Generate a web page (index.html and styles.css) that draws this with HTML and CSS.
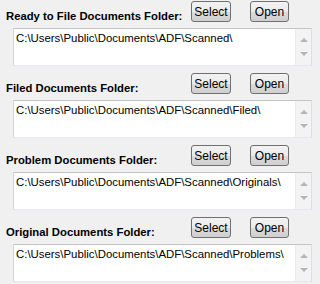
FILE: index.html
```html
<!DOCTYPE html>
<html lang="en">
<head>
    <meta charset="UTF-8">
    <title>Folders</title>
    <link rel="stylesheet" href="styles.css">
</head>
<body>
    <div class="panel">
        <div class="folder">
            <div class="folder-head">
                <span class="folder-label">Ready to File Documents Folder:</span>
                <button class="btn btn-select">Select</button>
                <button class="btn btn-open">Open</button>
            </div>
            <div class="path-box">
                <div class="path-text">C:\Users\Public\Documents\ADF\Scanned\</div>
                <div class="scroll"><span class="arrow-up"></span><span class="arrow-down"></span></div>
            </div>
        </div>

        <div class="folder">
            <div class="folder-head">
                <span class="folder-label">Filed Documents Folder:</span>
                <button class="btn btn-select">Select</button>
                <button class="btn btn-open">Open</button>
            </div>
            <div class="path-box">
                <div class="path-text">C:\Users\Public\Documents\ADF\Scanned\Filed\</div>
                <div class="scroll"><span class="arrow-up"></span><span class="arrow-down"></span></div>
            </div>
        </div>

        <div class="folder">
            <div class="folder-head">
                <span class="folder-label">Problem Documents Folder:</span>
                <button class="btn btn-select">Select</button>
                <button class="btn btn-open">Open</button>
            </div>
            <div class="path-box">
                <div class="path-text">C:\Users\Public\Documents\ADF\Scanned\Originals\</div>
                <div class="scroll"><span class="arrow-up"></span><span class="arrow-down"></span></div>
            </div>
        </div>

        <div class="folder">
            <div class="folder-head">
                <span class="folder-label">Original Documents Folder:</span>
                <button class="btn btn-select">Select</button>
                <button class="btn btn-open">Open</button>
            </div>
            <div class="path-box">
                <div class="path-text">C:\Users\Public\Documents\ADF\Scanned\Problems\</div>
                <div class="scroll"><span class="arrow-up"></span><span class="arrow-down"></span></div>
            </div>
        </div>
    </div>
</body>
</html>
```

FILE: styles.css
```css
* {
    margin: 0;
    padding: 0;
    box-sizing: border-box;
    font-family: 'Liberation Sans', Arial, sans-serif;
}

body {
    background: #f0f0f0;
    width: 320px;
    height: 284px;
    overflow: hidden;
}

.panel {
    padding-top: 1px;
}

.folder {
    height: 72px;
}

.folder-head {
    display: flex;
    align-items: flex-end;
    height: 21px;
}

.folder-label {
    width: 191px;
    padding-left: 6px;
    font-size: 11.3px;
    font-weight: bold;
    line-height: 14px;
    color: #000;
    white-space: nowrap;
    margin-bottom: -1px;
}

.btn {
    height: 21px;
    border: 1px solid #707070;
    border-radius: 3px;
    background: linear-gradient(#f2f2f2 0%, #ebebeb 50%, #dddddd 51%, #cfcfcf 100%);
    font-size: 12px;
    color: #000;
    align-self: flex-start;
}

.btn-select {
    width: 40px;
}

.btn-open {
    width: 39px;
    margin-left: 19px;
}

.path-box {
    display: flex;
    margin: 6px 0 0 13px;
    width: 299px;
    height: 38px;
    border: 1px solid #abadb3;
    border-top-color: #c4c4c4;
    border-left-color: #d4d4d4;
    border-right-color: #dbdfe6;
    border-bottom-color: #e3e9ef;
    background: #fff;
}

.path-text {
    flex: 1;
    padding: 2px 0 0 2px;
    font-size: 11.4px;
    line-height: 14px;
    color: #000;
    white-space: nowrap;
    overflow: hidden;
}

.scroll {
    width: 16px;
    background: #f3f3f3;
    border-left: 1px solid #ececec;
    display: flex;
    flex-direction: column;
    align-items: center;
    justify-content: space-between;
    padding: 9px 0 9px;
}

.arrow-up {
    width: 0;
    height: 0;
    border-left: 4px solid transparent;
    border-right: 4px solid transparent;
    border-bottom: 4px solid #b5b5b5;
}

.arrow-down {
    width: 0;
    height: 0;
    border-left: 4px solid transparent;
    border-right: 4px solid transparent;
    border-top: 4px solid #b5b5b5;
}
```
